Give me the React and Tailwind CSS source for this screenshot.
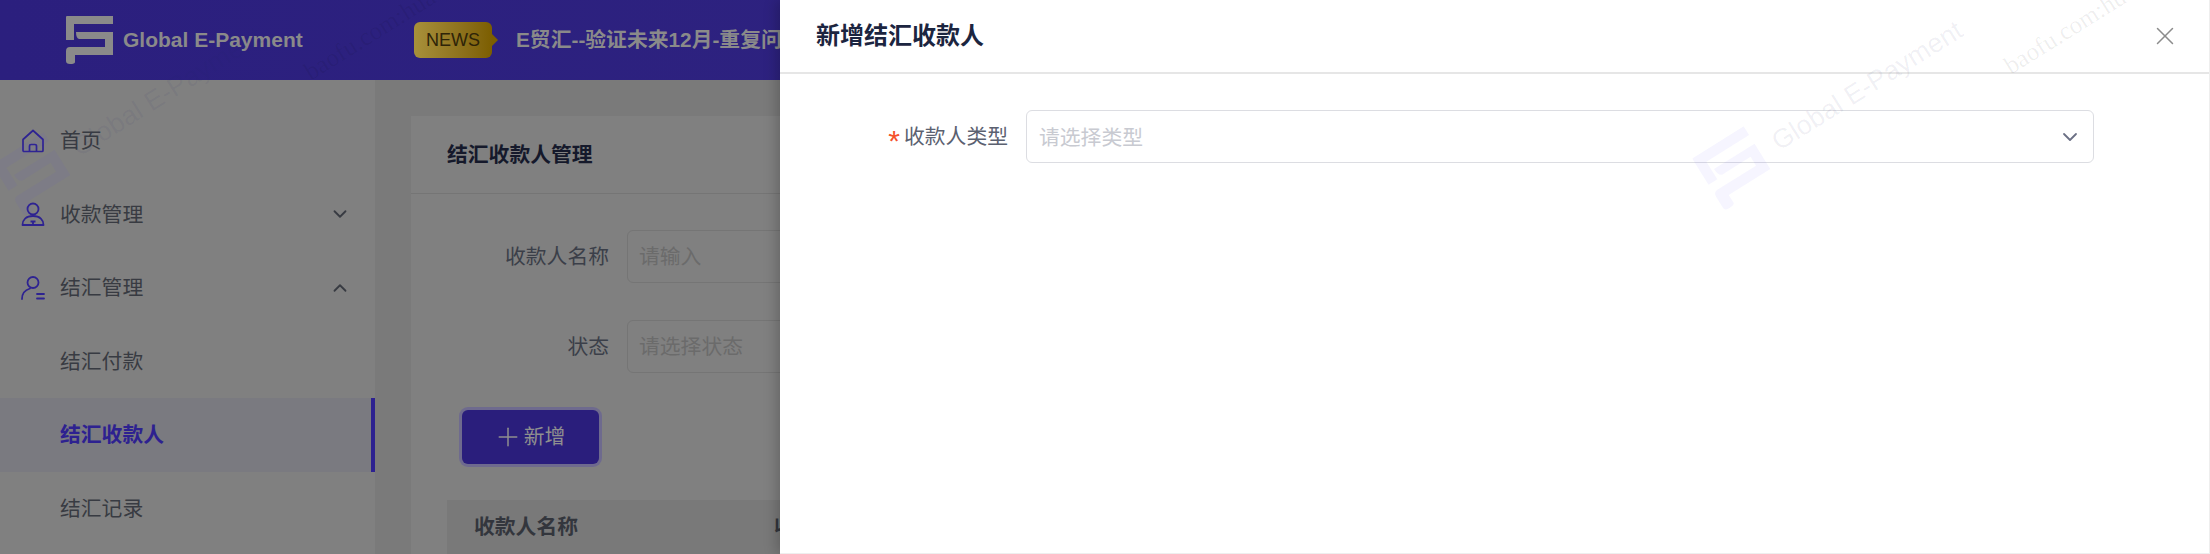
import { ChevronDown, ChevronUp, Plus, X } from 'lucide-react'

const LogoMark = ({ className = "" }) => (
  <svg viewBox="0 0 47 48" className={className} fill="currentColor">
    <path d="M1 0H47V8H8V24H0V1Q0 0 1 0Z" />
    <path d="M10 16H47V39H9V46Q9 48 4 48Q0 48 0 45V35Q0 31 4 31H39V23H13Q10 22 10 16Z" />
  </svg>
)

const HomeIcon = () => (
  <svg viewBox="0 0 24 24" className="w-6 h-6 shrink-0" fill="none" stroke="#2e2391" strokeWidth="1.7" strokeLinejoin="round">
    <path d="M2 10.500 12 1.500l10 9v11a1 1 0 0 1-1 1H3a1 1 0 0 1-1-1Z" />
    <path d="M8.500 22.500v-5.500a1.500 1.500 0 0 1 1.500-1.500h4a1.500 1.500 0 0 1 1.500 1.500v5.500" />
  </svg>
)

const UserIcon = () => (
  <svg viewBox="0 0 24 24" className="w-6 h-6 shrink-0" fill="none" stroke="#2e2391" strokeWidth="1.8" strokeLinejoin="round">
    <circle cx="12" cy="7" r="5.500" />
    <path d="M1.500 23c0-5 3.500-9 10.500-9s10.500 4 10.500 9Z" />
    <path d="M12 19.500V23M9.500 19.500h5" />
  </svg>
)

const UserListIcon = () => (
  <svg viewBox="0 0 24 24" className="w-6 h-6 shrink-0" fill="none" stroke="#2e2391" strokeWidth="1.8" strokeLinecap="round">
    <circle cx="12" cy="6.500" r="5.500" />
    <path d="M1 23c0-5 3-9 8-10.500" />
    <path d="M16 18h7M16 22.500h7" />
  </svg>
)

const Watermark = ({ className = "" }) => (
  <div className={`absolute pointer-events-none flex items-center -rotate-[32deg] origin-left whitespace-nowrap ${className}`}>
    <LogoMark className="w-[62px] h-[62px] text-[#4a3cff]/5" />
    <span className="ml-4 text-[27px] leading-none text-[#2a2a6a]/7">Global E-Payment</span>
    <span className="ml-[18px] translate-y-[58px] text-[25px] leading-none text-black/7 [font-family:'Liberation_Serif',serif]">baofu.com:huacan</span>
  </div>
)

const MenuRow = ({ icon, label, arrow }) => (
  <div className="h-[73.500px] flex items-center pl-[21px] pr-[24px] text-[20.800px] text-[#383b42]">
    <span className="w-[39px] shrink-0">{icon}</span>
    <span className="flex-1">{label}</span>
    {arrow === "down" && <ChevronDown size={22} strokeWidth={2} />}
    {arrow === "up" && <ChevronUp size={22} strokeWidth={2} />}
  </div>
)

const SubRow = ({ label, active }) => (
  <div className={`h-[73.500px] flex items-center pl-[60px] text-[20.800px] ${active ? "bg-[#7a7a80] border-r-4 border-[#2d2190] text-[#2d2190] font-bold" : "text-[#383b42]"}`}>
    {label}
  </div>
)

const FilterRow = ({ label, placeholder }) => (
  <div className="flex items-center h-[53px]">
    <label className="w-[216px] pr-[18px] text-right text-[20.800px] text-[#3b3f49]">{label}</label>
    <div className="w-[400px] h-full flex items-center pl-[11px] border border-[#757575] rounded-md text-[20.800px] text-[#6b6b6b]">{placeholder}</div>
  </div>
)

const App = () => {
  return (
    <div className="relative h-[554px] w-[2210px] overflow-hidden bg-[#7a7a7a] [font-family:'Liberation_Sans','Noto_Sans_CJK_SC',sans-serif]">
      {/* page behind the drawer, colours already dimmed */}
      <header className="h-20 flex items-center bg-gradient-to-r from-[#2b1f7e] to-[#312682]">
        <div className="flex items-center pl-[66px] w-[414px]">
          <LogoMark className="w-[47px] h-[48px] text-[#8a8a8a]" />
          <span className="ml-[10px] text-[21px] font-bold text-[#8a8a8a]">Global E-Payment</span>
        </div>
        <div className="relative h-9 w-[78px] flex items-center justify-center rounded-md bg-gradient-to-r from-[#a8903a] to-[#7c5e00] text-[18px] text-[#2e2408]">
          NEWS
          <span className="absolute -right-[6px] top-[12px] border-y-[6px] border-l-[6px] border-y-transparent border-l-[#7c5e00]" />
        </div>
        <div className="ml-[24px] text-[20.800px] font-bold text-[#8a8a8a] whitespace-nowrap">E贸汇--验证未来12月-重复问题</div>
      </header>

      <div className="flex h-[474px]">
        <aside className="w-[375px] shrink-0 bg-[#808080] pt-6">
          <MenuRow icon={<HomeIcon />} label="首页" />
          <MenuRow icon={<UserIcon />} label="收款管理" arrow="down" />
          <MenuRow icon={<UserListIcon />} label="结汇管理" arrow="up" />
          <SubRow label="结汇付款" />
          <SubRow label="结汇收款人" active />
          <SubRow label="结汇记录" />
        </aside>

        <main className="flex-1 pt-9 pl-9">
          <div className="h-full bg-[#808080]">
            <div className="h-[78px] flex items-center pl-9 border-b border-[#757575] text-[20.800px] font-bold text-[#15192b]">结汇收款人管理</div>
            <div className="pt-9 flex flex-col gap-[37px]">
              <FilterRow label="收款人名称" placeholder="请输入" />
              <FilterRow label="状态" placeholder="请选择状态" />
            </div>
            <button className="ml-[51px] mt-[37px] w-[137px] h-[54px] pr-[3px] flex items-center justify-center gap-px rounded-md bg-[#2a1e7c] ring-[3px] ring-[#6e6a8e] text-[20.800px] text-[#8f8f8f]">
              <Plus size={30} strokeWidth={1.2} />新增
            </button>
            <div className="ml-9 mt-9 h-[54px] flex items-center bg-[#797979] text-[20.800px] font-bold text-[#33363d]">
              <span className="pl-[27px] w-[327px]">收款人名称</span>
              <span>收款人类型</span>
            </div>
          </div>
        </main>
      </div>

      <Watermark className="left-[8px] top-[160px]" />

      {/* drawer */}
      <div className="absolute top-0 bottom-0 right-0 w-[1430px] bg-white border-r border-b border-[#eeeeee] shadow-[-4px_0_12px_rgba(0,0,0,0.2)] overflow-hidden">
        <div className="h-[74px] flex items-center justify-between pl-9 pr-[29px] border-b-2 border-[#e6e6e6]">
          <h2 className="text-2xl font-bold text-[#1c2540]">新增结汇收款人</h2>
          <X size={30} strokeWidth={1.2} className="text-[#8c8c8c]" />
        </div>
        <div className="flex items-center mt-9">
          <label className="flex items-center justify-end w-[246px] pr-[18px] text-[20.800px] text-[#5b6170]">
            <span className="text-[30px] leading-none text-[#f5522c] mr-[4px] translate-y-[4px]">*</span>收款人类型
          </label>
          <div className="w-[1068px] h-[53px] flex items-center justify-between pl-[12px] pr-[11px] border border-[#dcdde2] rounded-md text-[20.800px] text-[#c8cad1]">
            <span className="translate-y-px">请选择类型</span>
            <ChevronDown size={24} strokeWidth={1.8} className="text-[#6b7085]" />
          </div>
        </div>
        <Watermark className="left-[928px] top-[154px]" />
      </div>
    </div>
  )
}

export default App
